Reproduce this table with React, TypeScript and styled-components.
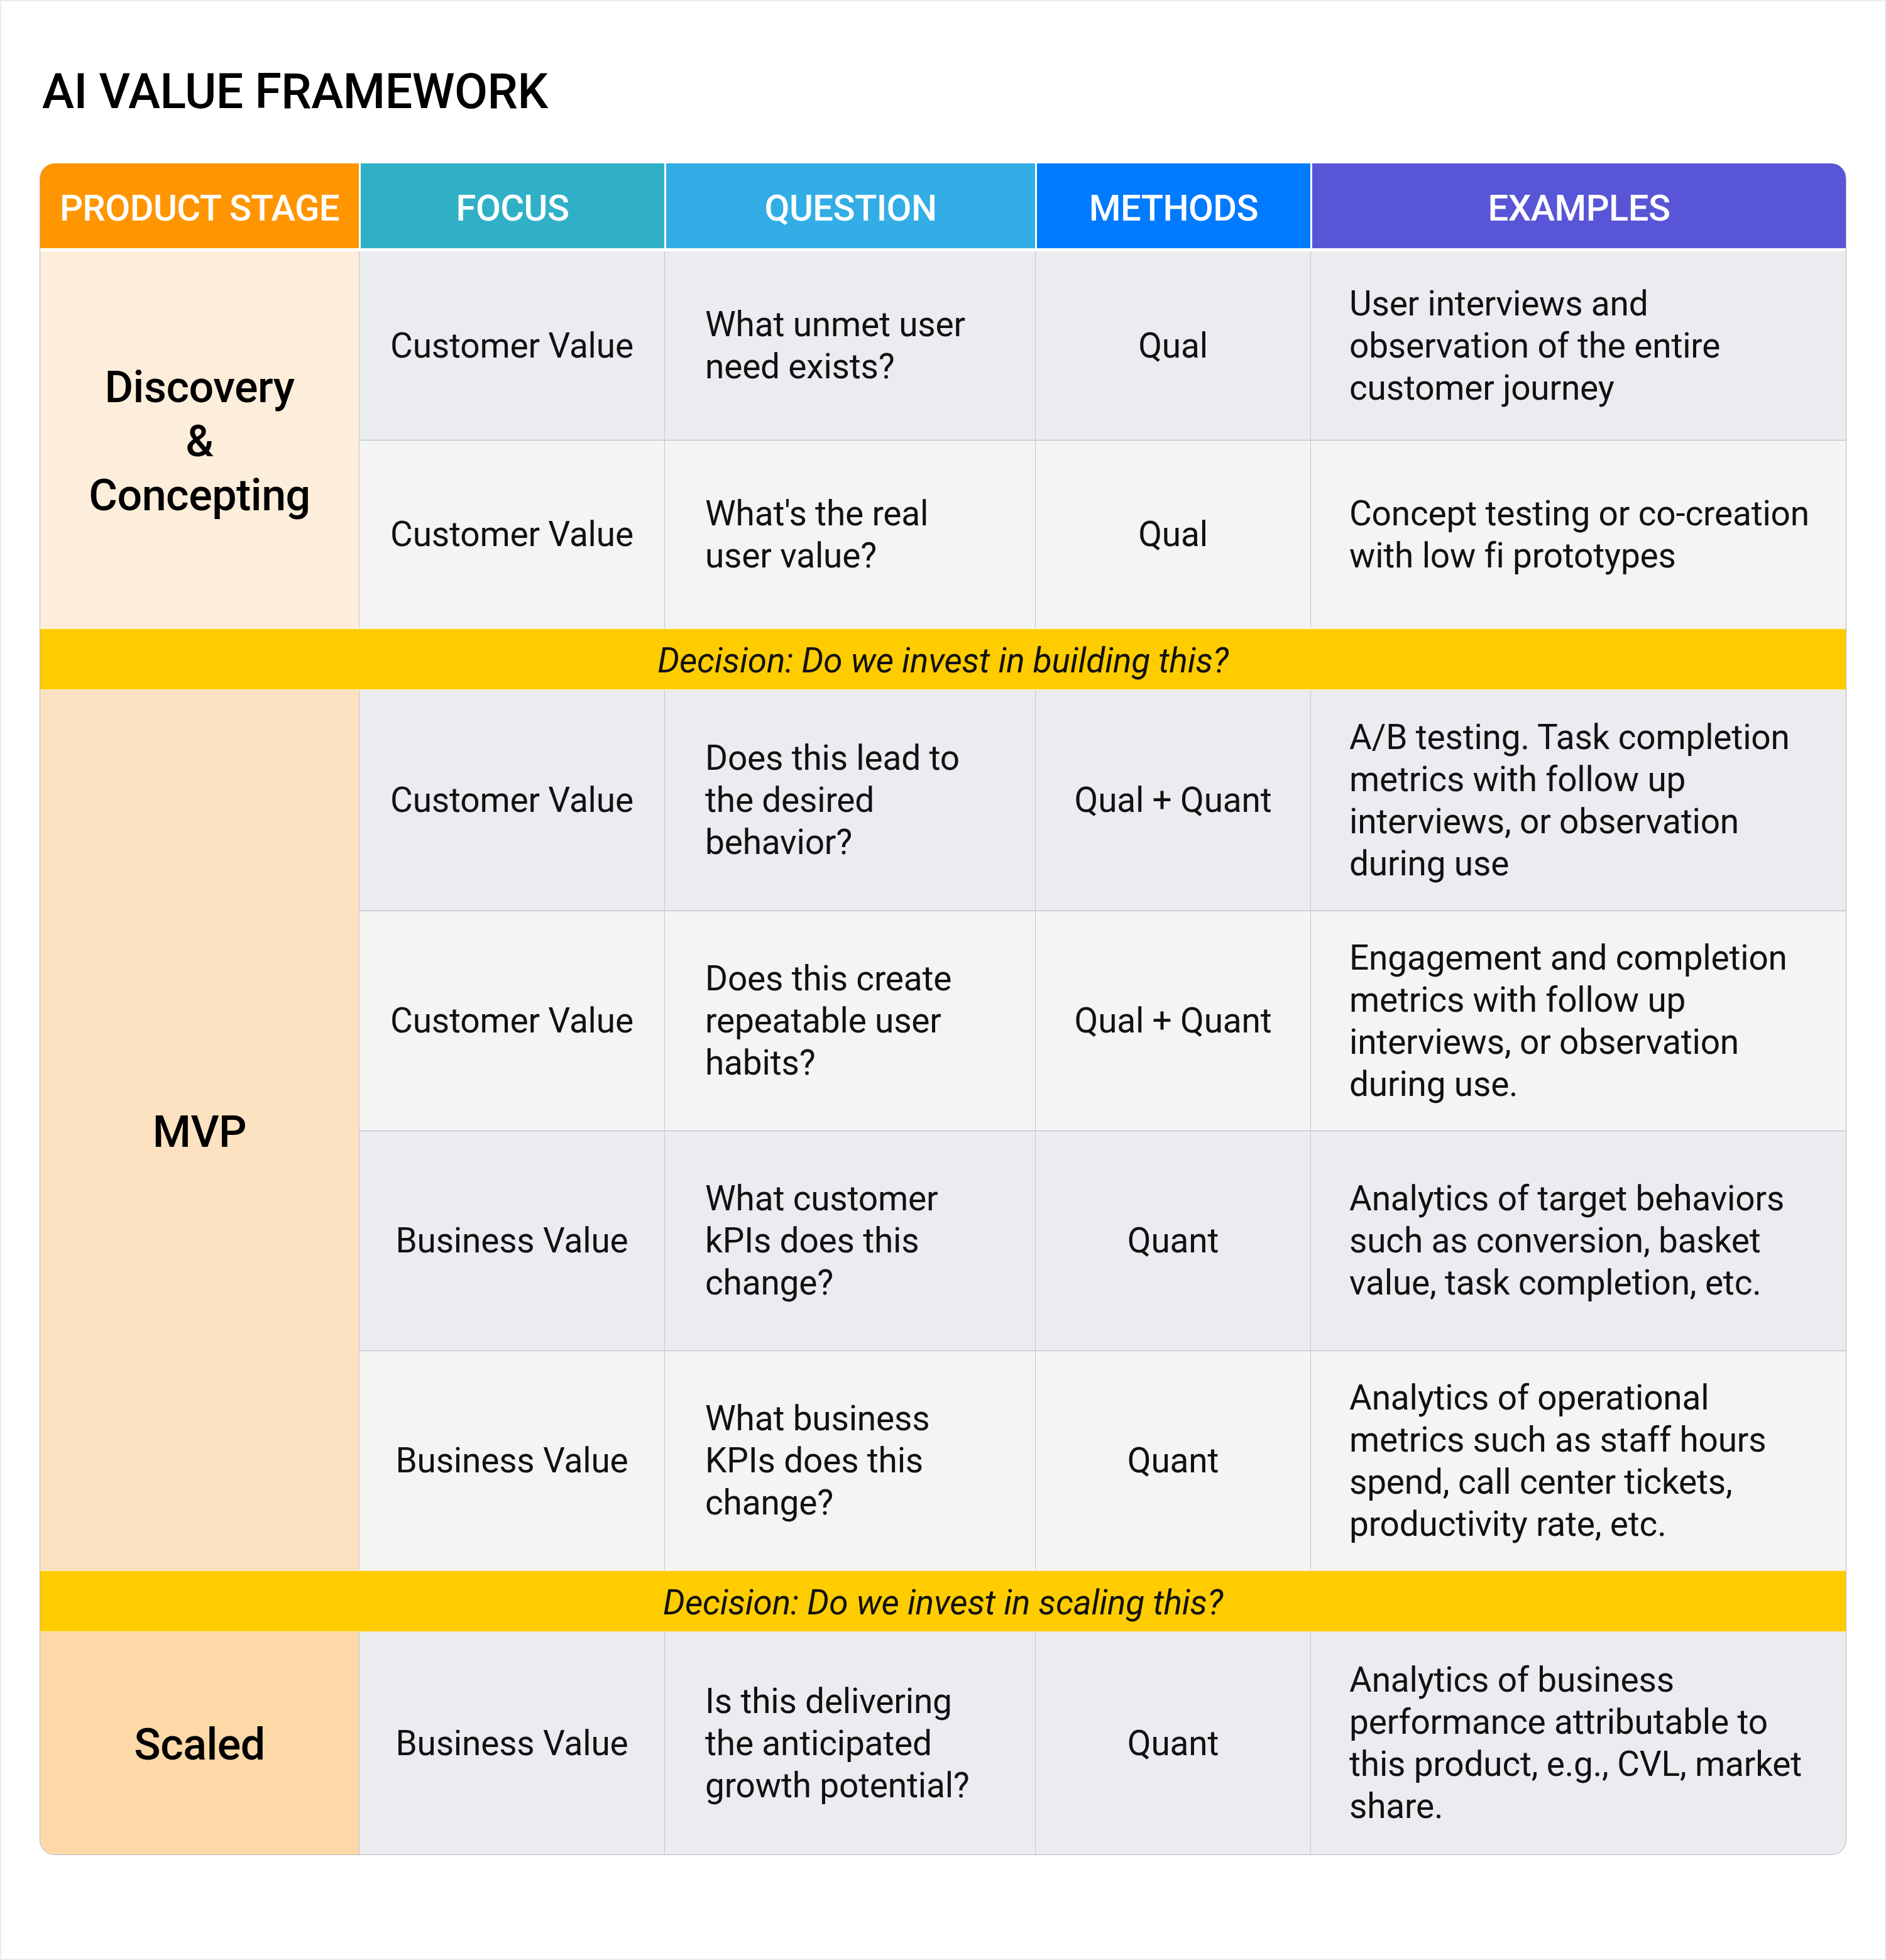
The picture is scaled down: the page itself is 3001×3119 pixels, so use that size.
import React from "react";
import styled, { createGlobalStyle } from "styled-components";

const GlobalStyle = createGlobalStyle`
  html, body {
    margin: 0;
    padding: 0;
    background: #e9edf1;
  }
  body {
    font-family: Roboto, "Liberation Sans", sans-serif;
    color: #111;
  }
`;

const Page = styled.div`
  box-sizing: border-box;
  width: 3001px;
  height: 3119px;
  border: 2px solid #e9edf1;
  background: #fff;
  padding: 98px 61px 0;
`;

const Title = styled.h1`
  margin: 0 0 68px 4px;
  font-size: 77px;
  line-height: 92px;
  font-weight: 500;
  letter-spacing: -0.5px;
  color: #000;
`;

const Table = styled.div`
  box-sizing: border-box;
  width: 2875px;
  display: grid;
  grid-template-columns: 507px 486px 590px 438px 852px;
  grid-template-rows: 140px 300px 300px 98px 351px 350px 350px 350px 98px 354px;
  border: 1px solid #b3b6bb;
  border-top: 0;
  border-radius: 24px;
  overflow: hidden;
`;

const HeaderCell = styled.div<{ $bg: string; $first?: boolean }>`
  box-sizing: border-box;
  display: flex;
  align-items: center;
  justify-content: center;
  padding-top: 6px;
  background: ${(p) => p.$bg};
  background-clip: padding-box;
  border-bottom: 5px solid #fff;
  border-left: ${(p) => (p.$first ? "0" : "3px solid #fff")};
  color: #fff;
  font-size: 58px;
  font-weight: 500;
  letter-spacing: -0.6px;
  white-space: nowrap;
`;

const StageCell = styled.div<{ $tone: string; $span: number }>`
  grid-row: span ${(p) => p.$span};
  display: flex;
  flex-direction: column;
  align-items: center;
  justify-content: center;
  padding-top: 4px;
  background: ${(p) => p.$tone};
  font-size: 70px;
  line-height: 86px;
  font-weight: 500;
  letter-spacing: -0.5px;
  color: #000;
  text-align: center;
`;

const Cell = styled.div<{ $shade: string; $center?: boolean; $pad: number; $top?: boolean }>`
  box-sizing: border-box;
  display: flex;
  flex-direction: column;
  justify-content: center;
  align-items: ${(p) => (p.$center ? "center" : "flex-start")};
  text-align: ${(p) => (p.$center ? "center" : "left")};
  padding: 0 ${(p) => (p.$center ? 0 : 20)}px 0 ${(p) => p.$pad}px;
  background: ${(p) => p.$shade};
  border-left: 1px solid #c5c7cc;
  border-top: ${(p) => (p.$top ? "1px solid #b5b8bd" : "0")};
  font-size: 55px;
  line-height: 67px;
  letter-spacing: -0.2px;
  color: #111;
`;

const Line = styled.span`
  display: block;
  white-space: nowrap;
`;

const Decision = styled.div`
  grid-column: 1 / -1;
  display: flex;
  align-items: center;
  justify-content: center;
  padding-top: 3px;
  background: #ffcc00;
  border-top: 1px solid #fff3c2;
  border-bottom: 1px solid #fff3c2;
  font-size: 55px;
  font-style: italic;
  letter-spacing: -0.2px;
  color: #111;
`;

type Row = {
  focus: string;
  question: string[];
  method: string;
  examples: string[];
};

type Group = {
  stage: string[];
  tone: string;
  rows: Row[];
  decision?: string;
};

const headers = [
  { label: "PRODUCT STAGE", bg: "#ff9500" },
  { label: "FOCUS", bg: "#30b0c7" },
  { label: "QUESTION", bg: "#32ade6" },
  { label: "METHODS", bg: "#007aff" },
  { label: "EXAMPLES", bg: "#5856d6" },
];

const groups: Group[] = [
  {
    stage: ["Discovery", "&", "Concepting"],
    tone: "#fdeedb",
    rows: [
      {
        focus: "Customer Value",
        question: ["What unmet user", "need exists?"],
        method: "Qual",
        examples: ["User interviews and", "observation of the entire", "customer journey"],
      },
      {
        focus: "Customer Value",
        question: ["What's the real", "user value?"],
        method: "Qual",
        examples: ["Concept testing or co-creation", "with low fi prototypes"],
      },
    ],
    decision: "Decision: Do we invest in building this?",
  },
  {
    stage: ["MVP"],
    tone: "#fde2c1",
    rows: [
      {
        focus: "Customer Value",
        question: ["Does this lead to", "the desired", "behavior?"],
        method: "Qual + Quant",
        examples: [
          "A/B testing. Task completion",
          "metrics with follow up",
          "interviews, or observation",
          "during use",
        ],
      },
      {
        focus: "Customer Value",
        question: ["Does this create", "repeatable user", "habits?"],
        method: "Qual + Quant",
        examples: [
          "Engagement and completion",
          "metrics with follow up",
          "interviews, or observation",
          "during use.",
        ],
      },
      {
        focus: "Business Value",
        question: ["What customer", "kPIs does this", "change?"],
        method: "Quant",
        examples: [
          "Analytics of target behaviors",
          "such as conversion, basket",
          "value, task completion, etc.",
        ],
      },
      {
        focus: "Business Value",
        question: ["What business", "KPIs does this", "change?"],
        method: "Quant",
        examples: [
          "Analytics of operational",
          "metrics such as staff hours",
          "spend, call center tickets,",
          "productivity rate, etc.",
        ],
      },
    ],
    decision: "Decision: Do we invest in scaling this?",
  },
  {
    stage: ["Scaled"],
    tone: "#fdd9a7",
    rows: [
      {
        focus: "Business Value",
        question: ["Is this delivering", "the anticipated", "growth potential?"],
        method: "Quant",
        examples: [
          "Analytics of business",
          "performance attributable to",
          "this product, e.g., CVL, market",
          "share.",
        ],
      },
    ],
  },
];

const shades = ["#ebecf0", "#f4f4f4"];

const Lines = ({ lines }: { lines: string[] }) => (
  <div>
    {lines.map((l) => (
      <Line key={l}>{l}</Line>
    ))}
  </div>
);

export default function App() {
  return (
    <>
      <GlobalStyle />
      <Page>
        <Title>AI VALUE FRAMEWORK</Title>
        <Table>
          {headers.map((h, i) => (
            <HeaderCell key={h.label} $bg={h.bg} $first={i === 0}>
              {h.label}
            </HeaderCell>
          ))}
          {groups.map((g) => (
            <React.Fragment key={g.stage.join(" ")}>
              <StageCell $tone={g.tone} $span={g.rows.length}>
                {g.stage.map((s) => (
                  <Line key={s}>{s}</Line>
                ))}
              </StageCell>
              {g.rows.map((r, i) => {
                const shade = shades[i % 2];
                const top = i > 0;
                return (
                  <React.Fragment key={r.question.join(" ")}>
                    <Cell $shade={shade} $center $pad={0} $top={top}>
                      {r.focus}
                    </Cell>
                    <Cell $shade={shade} $pad={64} $top={top}>
                      <Lines lines={r.question} />
                    </Cell>
                    <Cell $shade={shade} $center $pad={0} $top={top}>
                      {r.method}
                    </Cell>
                    <Cell $shade={shade} $pad={61} $top={top}>
                      <Lines lines={r.examples} />
                    </Cell>
                  </React.Fragment>
                );
              })}
              {g.decision && <Decision>{g.decision}</Decision>}
            </React.Fragment>
          ))}
        </Table>
      </Page>
    </>
  );
}
